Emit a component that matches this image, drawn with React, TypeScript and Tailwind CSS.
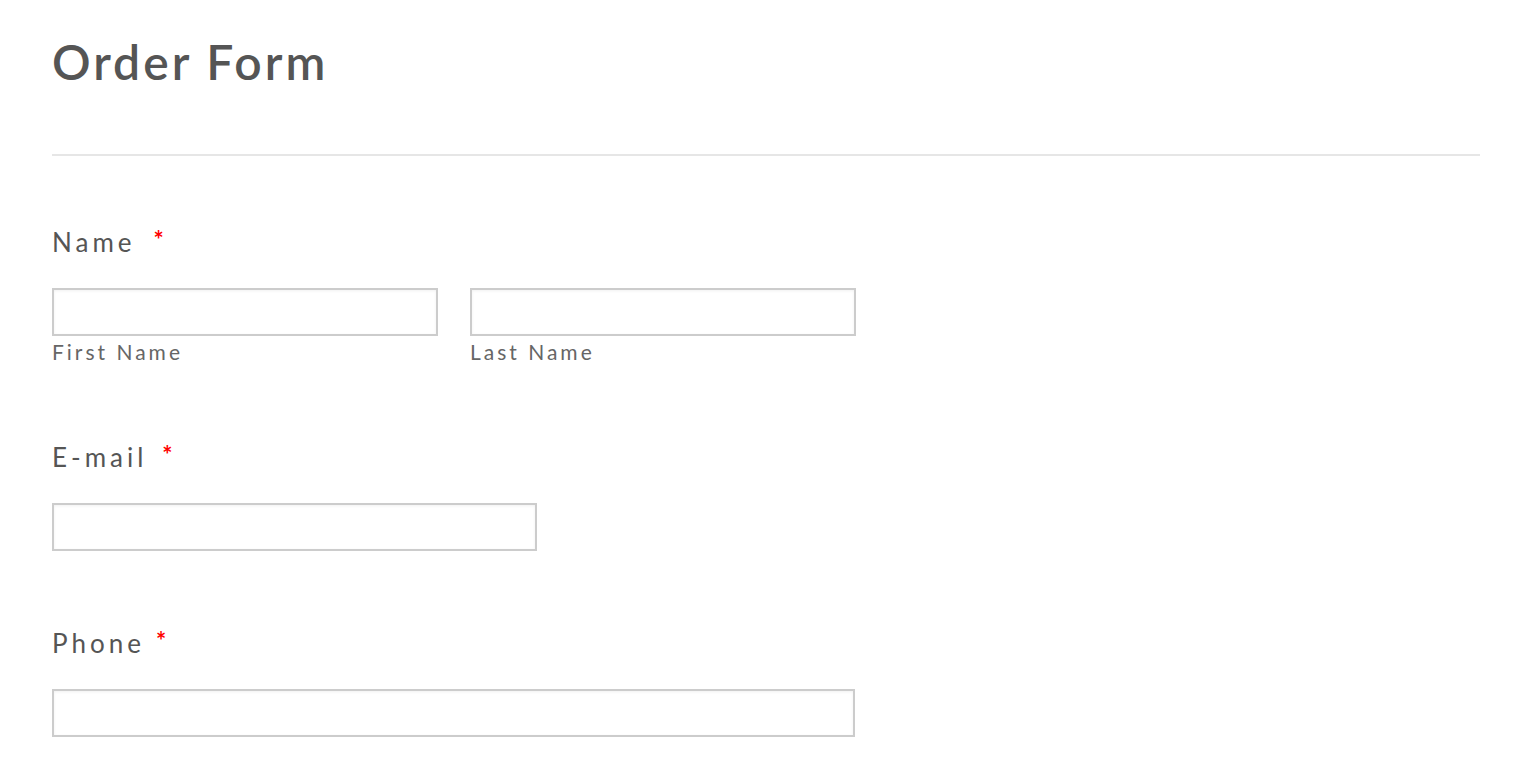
import React from "react";

const FONT = "font-['Lato','Open_Sans',sans-serif]";

function Req({ gap }: { gap: string }) {
  return <span className={`${gap} mt-[4px] text-[24px] font-bold leading-none text-[#ff0000]`}>*</span>;
}

function Field({ w }: { w: string }) {
  return (
    <input
      type="text"
      className={`${w} h-[48px] border-2 border-[#cccccc] bg-white shadow-[inset_0_1px_3px_rgba(0,0,0,0.06)] outline-none`}
    />
  );
}

export default function App() {
  return (
    <div className={`${FONT} min-h-screen bg-white pl-[52px] pr-[41px] text-[#555555]`}>
      <h1 className="pt-[29px] text-[48px] leading-[66px] font-semibold tracking-[3px] text-[#555555]">
        Order Form
      </h1>
      <div className="mt-[59px] h-[2px] bg-[#e6e6e6]" />

      {/* Name */}
      <div className="mt-[68px]">
        <label className="flex items-start text-[26px] leading-[36px] tracking-[4px]">
          Name
          <Req gap="ml-[18px]" />
        </label>
        <div className="mt-[28px] flex gap-[32px]">
          <div className="flex flex-col">
            <Field w="w-[386px]" />
            <span className="mt-[3px] text-[21px] leading-[26px] tracking-[3px] text-[#666666]">First Name</span>
          </div>
          <div className="flex flex-col">
            <Field w="w-[386px]" />
            <span className="mt-[3px] text-[21px] leading-[26px] tracking-[3px] text-[#666666]">Last Name</span>
          </div>
        </div>
      </div>

      {/* E-mail */}
      <div className="mt-[74px]">
        <label className="flex items-start text-[26px] leading-[36px] tracking-[4px]">
          E-mail
          <Req gap="ml-[15px]" />
        </label>
        <div className="mt-[28px]">
          <Field w="w-[485px]" />
        </div>
      </div>

      {/* Phone */}
      <div className="mt-[74px]">
        <label className="flex items-start text-[26px] leading-[36px] tracking-[4px]">
          Phone
          <Req gap="ml-[11px]" />
        </label>
        <div className="mt-[28px]">
          <Field w="w-[803px]" />
        </div>
      </div>
    </div>
  );
}
